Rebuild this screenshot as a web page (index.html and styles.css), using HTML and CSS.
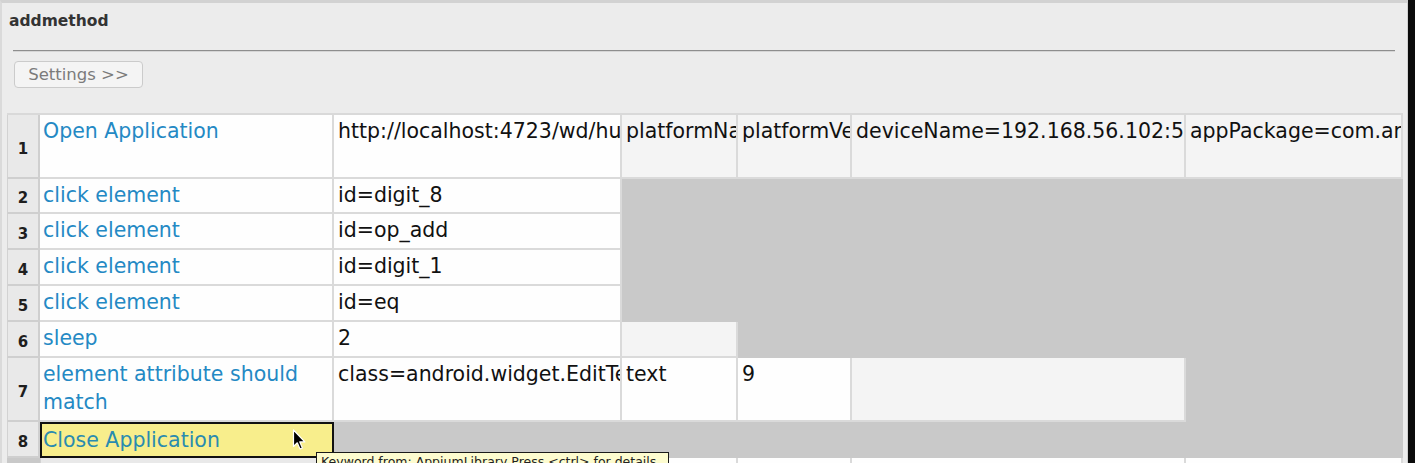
FILE: index.html
```html
<!DOCTYPE html>
<html>
<head>
<meta charset="utf-8">
<title>addmethod</title>
<link rel="stylesheet" href="styles.css">
</head>
<body>
<div class="window">
  <div class="panel">
    <h1 class="title">addmethod</h1>
    <hr class="rule">
    <button class="settings">Settings &gt;&gt;</button>
    <div class="grid">
      <div class="cell num">1</div>
      <div class="cell kw">Open Application</div>
      <div class="cell">http://localhost:4723/wd/hub</div>
      <div class="cell opt">platformName=Android</div>
      <div class="cell opt">platformVersion=7.0</div>
      <div class="cell opt">deviceName=192.168.56.102:5555</div>
      <div class="cell opt">appPackage=com.android.calculator2</div>

      <div class="cell num">2</div>
      <div class="cell kw">click element</div>
      <div class="cell">id=digit_8</div>
      <div class="cell na"></div><div class="cell na"></div><div class="cell na"></div><div class="cell na"></div>

      <div class="cell num">3</div>
      <div class="cell kw">click element</div>
      <div class="cell">id=op_add</div>
      <div class="cell na"></div><div class="cell na"></div><div class="cell na"></div><div class="cell na"></div>

      <div class="cell num">4</div>
      <div class="cell kw">click element</div>
      <div class="cell">id=digit_1</div>
      <div class="cell na"></div><div class="cell na"></div><div class="cell na"></div><div class="cell na"></div>

      <div class="cell num">5</div>
      <div class="cell kw">click element</div>
      <div class="cell">id=eq</div>
      <div class="cell na"></div><div class="cell na"></div><div class="cell na"></div><div class="cell na"></div>

      <div class="cell num">6</div>
      <div class="cell kw">sleep</div>
      <div class="cell">2</div>
      <div class="cell opt"></div>
      <div class="cell na"></div><div class="cell na"></div><div class="cell na"></div>

      <div class="cell num">7</div>
      <div class="cell kw">element attribute should match</div>
      <div class="cell">class=android.widget.EditText</div>
      <div class="cell">text</div>
      <div class="cell">9</div>
      <div class="cell opt"></div>
      <div class="cell na"></div>

      <div class="cell num">8</div>
      <div class="cell kw sel">Close Application
        <svg class="cursor" width="14" height="21" viewBox="0 0 14 21"><path d="M1.5 1 L1.5 17.5 L5.3 13.8 L8 20 L10.4 19 L7.8 12.9 L12.8 12.9 Z" fill="#000" stroke="#fff" stroke-width="1.2" stroke-linejoin="round"/></svg>
        <div class="tip">Keyword from: AppiumLibrary Press &lt;ctrl&gt; for details</div>
      </div>
      <div class="cell na"></div><div class="cell na"></div><div class="cell na"></div><div class="cell na"></div><div class="cell na"></div><div class="cell na"></div>

      <div class="cell num"></div>
      <div class="cell kw"></div>
      <div class="cell"></div>
      <div class="cell"></div>
      <div class="cell"></div>
      <div class="cell"></div>
      <div class="cell"></div>
    </div>
  </div>
  <div class="edge"></div>
</div>
</body>
</html>
```

FILE: styles.css
```css
html, body {
  margin: 0;
  height: 463px;
  overflow: hidden;
  background: #ececec;
  font-family: "DejaVu Sans", "Noto Sans", sans-serif;
}

.window {
  display: flex;
  height: 463px;
}

.panel {
  flex: 1;
  min-width: 0;
  border-top: 3px solid #d2d2d2;
  border-left: 2px solid #dadada;
  border-right: 1px solid #d0d0d0;
  padding: 9px 0 0 5px;
}

.edge {
  width: 7px;
  background: #0b0b0b;
}

.title {
  margin: 0 0 0 2px;
  font-size: 15.5px;
  line-height: 18px;
  font-weight: bold;
  color: #333;
}

.rule {
  margin: 20px 12px 0 6px;
  height: 0;
  border: 0;
  border-top: 1px solid #8e8e8e;
  border-bottom: 1px solid #d6d6d6;
}

.settings {
  display: block;
  margin: 9px 0 0 7px;
  width: 129px;
  height: 27px;
  padding: 0;
  background: #f4f4f4;
  border: 1px solid #cbcbcb;
  border-radius: 4px;
  font-family: "DejaVu Sans", sans-serif;
  font-size: 16.5px;
  color: #7b7b7b;
}

.grid {
  margin-top: 25px;
  display: grid;
  grid-template-columns: 33px 294px 288px 116px 114px 334px 217px;
  grid-template-rows: 64px 35px 36px 36px 36px 36px 64px 36px 36px;
  border-top: 2px solid #d9d9d9;
  width: 1396px;
}

.cell {
  box-sizing: border-box;
  background: #fefefe;
  border-right: 2px solid #dadada;
  border-bottom: 2px solid #dadada;
  padding: 2px 4px 0 4px;
  font-size: 20.5px;
  line-height: 28px;
  color: #111;
  white-space: nowrap;
  overflow: hidden;
}

.num {
  display: flex;
  align-items: center;
  justify-content: center;
  padding: 5px 0 0 0;
  background: #e9e9e9;
  border-left: 1px solid #d2d2d2;
  border-right-color: #cfcfcf;
  border-bottom-color: #cfcfcf;
  font-size: 15px;
  font-weight: bold;
  color: #1e1e1e;
}

.kw {
  padding-left: 3px;
  color: #2489c4;
  white-space: normal;
}

.opt {
  background: #f4f4f4;
}

.na {
  background: #c9c9c9;
  border-color: #c9c9c9;
}

.sel {
  position: relative;
  overflow: visible;
  background: #f8ee8c;
  border: 2px solid #111;
  padding-left: 1px;
  color: #2a8bb0;
}

.cursor {
  position: absolute;
  left: 250px;
  top: 5px;
}

.tip {
  position: absolute;
  left: 274px;
  top: 28px;
  z-index: 5;
  background: #fdfccf;
  border: 1px solid #1a1a1a;
  padding: 1px 12px 1px 4px;
  font-size: 12.5px;
  line-height: 16px;
  color: #222;
  white-space: nowrap;
}
```
